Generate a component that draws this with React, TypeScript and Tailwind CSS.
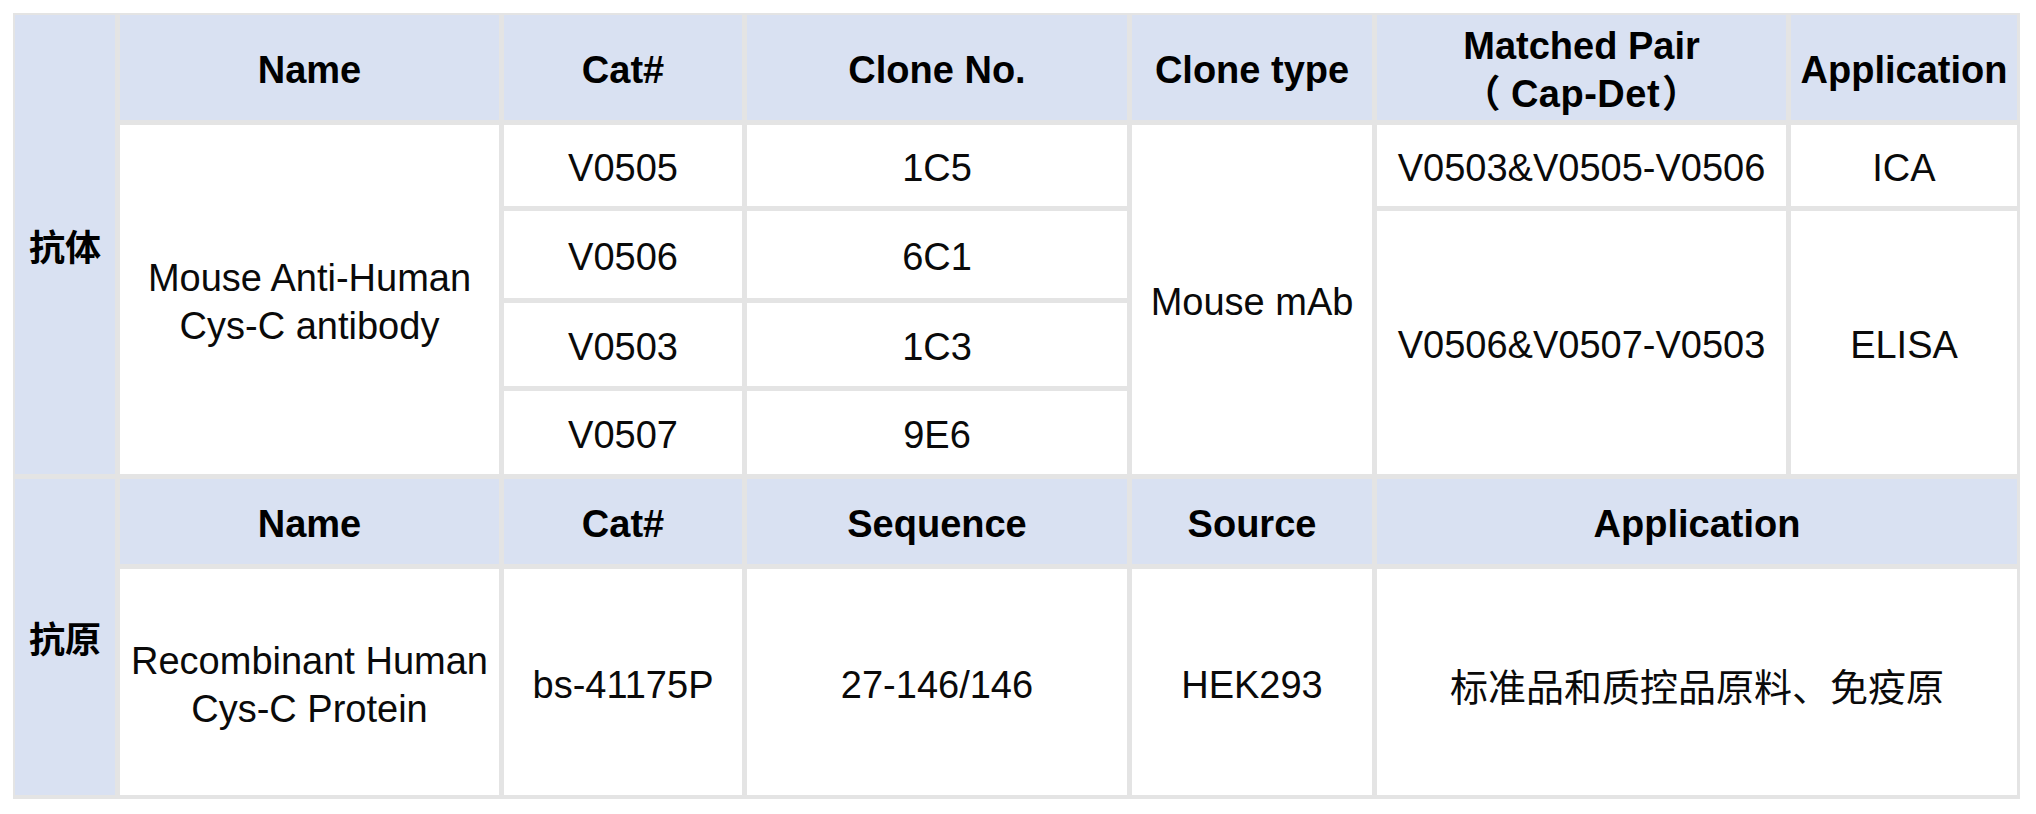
import React from "react";

// Cys-C antibody / antigen product table
const font = "font-['Liberation_Sans','Noto_Sans_CJK_SC',sans-serif]";
const head = "bg-[#d9e1f2] flex items-center justify-center text-center pt-[5px] font-bold text-[38px] leading-[48px] text-black";
const cell = "bg-white flex items-center justify-center text-center pt-[5px] text-[38px] leading-[48px] text-[#0a0a0a]";
const side = "bg-[#d9e1f2] flex items-center justify-center font-['Noto_Sans_CJK_SC',sans-serif] font-bold text-[36px] text-black";

export default function App() {
  return (
    <div className={`min-h-screen bg-white pt-[13px] pl-[13px] ${font}`}>
      <div className="inline-block bg-[#e4e4e4] pt-[2px] pl-[2px] pr-[3px] pb-[4px]">
        <div className="grid grid-cols-[100px_379px_238px_380px_240px_409px_226px] grid-rows-[105px_81px_87px_83px_83px_85px_226px] gap-[5px]">
          {/* 抗体 section */}
          <div className={`${side} col-start-1 row-start-1 row-span-5`}>抗体</div>
          <div className={`${head} col-start-2 row-start-1`}>Name</div>
          <div className={`${head} col-start-3 row-start-1`}>Cat#</div>
          <div className={`${head} col-start-4 row-start-1`}>Clone No.</div>
          <div className={`${head} col-start-5 row-start-1`}>Clone type</div>
          <div className={`${head} col-start-6 row-start-1 flex-col`}>
            <span>Matched Pair</span>
            <span className="tracking-[0.5px]">
              <span className="mr-[10px]">（</span>Cap-Det<span className="ml-[2px]">）</span>
            </span>
          </div>
          <div className={`${head} col-start-7 row-start-1`}>Application</div>

          <div className={`${cell} col-start-2 row-start-2 row-span-4 flex-col`}>
            <span>Mouse Anti-Human</span>
            <span>Cys-C antibody</span>
          </div>
          <div className={`${cell} col-start-3 row-start-2`}>V0505</div>
          <div className={`${cell} col-start-4 row-start-2`}>1C5</div>
          <div className={`${cell} col-start-3 row-start-3`}>V0506</div>
          <div className={`${cell} col-start-4 row-start-3`}>6C1</div>
          <div className={`${cell} col-start-3 row-start-4`}>V0503</div>
          <div className={`${cell} col-start-4 row-start-4`}>1C3</div>
          <div className={`${cell} col-start-3 row-start-5`}>V0507</div>
          <div className={`${cell} col-start-4 row-start-5`}>9E6</div>
          <div className={`${cell} col-start-5 row-start-2 row-span-4`}>Mouse mAb</div>
          <div className={`${cell} col-start-6 row-start-2`}>V0503&amp;V0505-V0506</div>
          <div className={`${cell} col-start-7 row-start-2`}>ICA</div>
          <div className={`${cell} col-start-6 row-start-3 row-span-3`}>V0506&amp;V0507-V0503</div>
          <div className={`${cell} col-start-7 row-start-3 row-span-3`}>ELISA</div>

          {/* 抗原 section */}
          <div className={`${side} col-start-1 row-start-6 row-span-2`}>抗原</div>
          <div className={`${head} col-start-2 row-start-6`}>Name</div>
          <div className={`${head} col-start-3 row-start-6`}>Cat#</div>
          <div className={`${head} col-start-4 row-start-6`}>Sequence</div>
          <div className={`${head} col-start-5 row-start-6`}>Source</div>
          <div className={`${head} col-start-6 row-start-6 col-span-2`}>Application</div>

          <div className={`${cell} col-start-2 row-start-7 flex-col`}>
            <span>Recombinant Human</span>
            <span>Cys-C Protein</span>
          </div>
          <div className={`${cell} col-start-3 row-start-7`}>bs-41175P</div>
          <div className={`${cell} col-start-4 row-start-7`}>27-146/146</div>
          <div className={`${cell} col-start-5 row-start-7`}>HEK293</div>
          <div className={`${cell} col-start-6 row-start-7 col-span-2 font-['Noto_Sans_CJK_SC',sans-serif]`}>
            标准品和质控品原料、免疫原
          </div>
        </div>
      </div>
    </div>
  );
}
